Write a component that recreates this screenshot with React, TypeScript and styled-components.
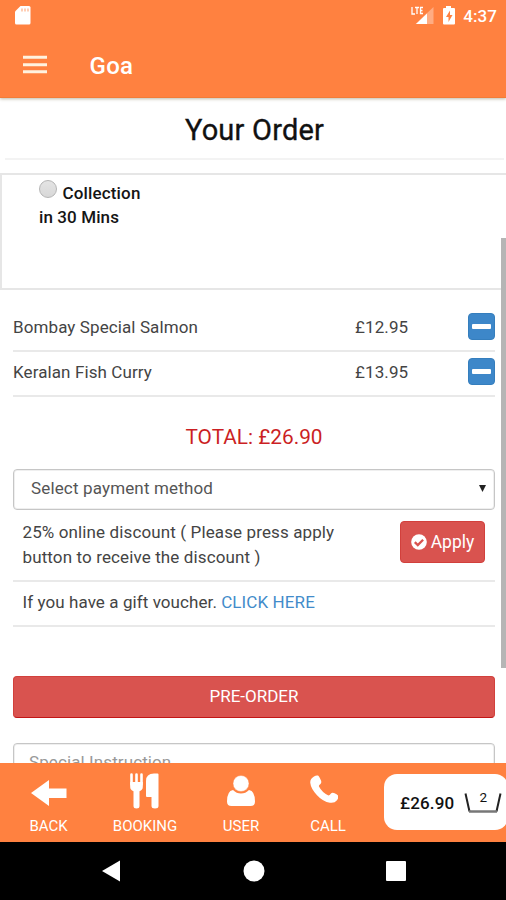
import React from 'react';
import styled, { createGlobalStyle } from 'styled-components';

const ORANGE = '#ff8140';

const GlobalStyle = createGlobalStyle`
  *, *::before, *::after { box-sizing: border-box; }
  html, body { margin: 0; padding: 0; background: #fff; }
  body { font-family: Roboto, "Liberation Sans", sans-serif; color: #444; overflow: hidden; }
  svg { display: block; }
`;

const Label = styled.span<{ $ls?: number }>`
  display: inline-block;
  white-space: nowrap;
  letter-spacing: ${({ $ls = 0 }) => $ls}px;
`;

const Screen = styled.div`
  width: 506px;
  height: 900px;
  display: flex;
  flex-direction: column;
  overflow: hidden;
`;

const Header = styled.header`
  flex: none;
  height: 98px;
  background: ${ORANGE};
  color: #fff;
  position: relative;
  z-index: 1;
  border-bottom: 1px solid #f27c38;
  box-shadow: 0 1px 3px rgba(90, 80, 40, 0.4);
`;

const StatusBar = styled.div`
  height: 32px;
  display: flex;
  justify-content: space-between;
  padding: 0 9px 0 15px;
`;

const StatusIcons = styled.div`
  display: flex;
`;

const Clock = styled.time`
  margin-left: 8px;
  font-size: 17px;
  line-height: 32px;
  font-weight: 500;
  letter-spacing: 0.1px;
`;

const AppBar = styled.div`
  height: 66px;
  display: flex;
  align-items: center;
  padding-left: 23px;
`;

const AppTitle = styled.h1`
  margin: 1px 0 0 42.5px;
  font-size: 24px;
  line-height: 30px;
  font-weight: 500;
  letter-spacing: 0.3px;
`;

const Content = styled.main`
  flex: none;
  height: 665px;
  overflow: hidden;
  position: relative;
  background: #fff;
`;

const Heading = styled.h2`
  margin: 0 2px 0 5px;
  height: 62px;
  border-bottom: 2px solid #f3f3f3;
  color: #111;
  font-size: 29px;
  line-height: 65px;
  font-weight: 400;
  -webkit-text-stroke: 0.35px #111;
  text-align: center;
`;

const CollectionBox = styled.section`
  margin-top: 13px;
  height: 117px;
  border: 2px solid #e6e6e6;
  border-right: 0;
  padding: 6px 0 0 37px;
  color: #151515;
  font-size: 17px;
  line-height: 24px;
  font-weight: 500;
`;

const RadioLine = styled.label`
  display: flex;
  gap: 5.5px;
`;

const Radio = styled.span`
  width: 18px;
  height: 18px;
  margin-top: -1px;
  border-radius: 50%;
  border: 1.5px solid #b5b5b5;
  background: linear-gradient(#e4e4e4, #d8d8d8);
`;

const Items = styled.section`
  margin: 17px 11px 0 13px;
`;

const ItemRow = styled.div`
  height: 45px;
  display: grid;
  grid-template-columns: 342px 1fr 27px;
  border-bottom: 2px solid #e9e9e9;
  font-size: 17px;
  line-height: 41px;
`;

const RemoveButton = styled.button`
  width: 27px;
  height: 27px;
  margin: 6px 0 0;
  padding: 0 0 1px;
  border: 1px solid #357ebd;
  border-radius: 4px;
  background: #3d87c9;
  display: flex;
  align-items: center;
  justify-content: center;
`;

const Total = styled.p`
  margin: 25px 0 0;
  padding-left: 2px;
  font-size: 20.8px;
  line-height: 30px;
  color: #cb1f24;
  text-align: center;
`;

const PaymentSelect = styled.div`
  margin: 17px 11px 0 13px;
  height: 41px;
  border: 1px solid #c6c6c6;
  box-shadow: inset 0 0 0 1px #efefef;
  border-radius: 4px;
  display: flex;
  justify-content: space-between;
  align-items: center;
  padding: 0 8px 3px 17px;
  font-size: 17px;
  color: #555;
`;

const OfferRow = styled.div<{ $height: number; $top: number }>`
  margin: 0 11px 0 13px;
  height: ${({ $height }) => $height}px;
  padding: ${({ $top }) => $top}px 10px 0 9.5px;
  border-bottom: 2px solid #e9e9e9;
  display: flex;
  justify-content: space-between;
  font-size: 17px;
  line-height: 25px;
`;

const OfferText = styled.div`
  display: flex;
  flex-direction: column;
`;

const VoucherLink = styled.a`
  color: #428bca;
`;

const ApplyButton = styled.button`
  width: 85px;
  height: 42px;
  margin-top: 1px;
  padding: 0 0 1px;
  border: 1px solid #d2403c;
  border-radius: 4px;
  background: #d9534f;
  color: #fff;
  font: 400 17.5px Roboto, sans-serif;
  display: flex;
  align-items: center;
  justify-content: center;
  gap: 4px;
`;

const PreOrderButton = styled.button`
  display: block;
  width: 482px;
  height: 42px;
  margin: 49px 0 0 13px;
  padding: 0 0 2px;
  border: 1px solid #d2403c;
  border-bottom: 1px solid #c21616;
  border-radius: 4px;
  background: #d9534f;
  color: #fff;
  font: 400 17px Roboto, sans-serif;
`;

const Instructions = styled.div`
  margin: 25px 11px 0 13px;
  height: 80px;
  border: 1px solid #c6c6c6;
  box-shadow: inset 0 0 0 1px #efefef;
  border-radius: 4px;
  padding: 6px 0 0 15px;
  font-size: 17px;
  line-height: 24px;
  color: #999;
`;

const ScrollThumb = styled.div`
  position: absolute;
  right: 0;
  top: 140px;
  width: 5px;
  height: 430px;
  background: #b5b5b5;
`;

const TabBar = styled.nav`
  flex: none;
  height: 79px;
  background: ${ORANGE};
  display: grid;
  grid-template-columns: 97px 96px 96px 78px 1fr;
  color: #fff;
`;

const Tab = styled.a`
  display: flex;
  flex-direction: column;
  align-items: center;
  padding-top: 9px;
  font-size: 15px;
  line-height: 18px;
`;

const TabIcon = styled.span<{ $dx?: number }>`
  height: 37px;
  margin: 0 ${({ $dx = 0 }) => $dx}px 8px 0;
`;

const Basket = styled.div`
  width: 124px;
  height: 56px;
  margin: 11px 0 0 17px;
  border-radius: 13px;
  background: #fff;
  color: #111;
  display: flex;
  align-items: center;
  padding: 2px 0 0 16px;
  gap: 10px;
  font-size: 17px;
  font-weight: 500;
`;

const BasketCount = styled.span`
  position: relative;
  width: 38px;
  height: 22px;
  flex: none;
`;

const Count = styled.span`
  position: absolute;
  left: 0;
  right: 0;
  top: -4px;
  text-align: center;
  font-size: 13.5px;
  line-height: 18px;
  font-weight: 400;
`;

const SystemNav = styled.footer`
  flex: none;
  height: 58px;
  background: #000;
  display: grid;
  grid-template-columns: 142px 143px 142px;
  padding-left: 40px;
  align-items: center;
  justify-items: center;
`;

const items = [
  { name: 'Bombay Special Salmon', price: '£12.95' },
  { name: 'Keralan Fish Curry', price: '£13.95' },
];

export default function App() {
  return (
    <Screen>
      <GlobalStyle />
      <Header>
        <StatusBar>
          <svg width="16" height="32" viewBox="0 0 16 32">
            <path d="M5.500 6H14q1.500 0 1.500 1.500V23q0 1.500-1.500 1.500H1.500Q0 24.500 0 23V11.500z" fill="#fff" />
            <path d="M7 8.500v3M10 8.500v3M13 8.500v3" stroke="#ffb48e" strokeWidth="1.300" />
          </svg>
          <StatusIcons>
            <svg width="44" height="32" viewBox="0 0 44 32">
              <path d="M22.500 7v17H4.500z" fill="#ffac82" />
              <path d="M16 13.500V24H5z" fill="#fff" />
              <path d="M1 7v7h3M4 7.500h4M6 7v7M12 7.500H9.500v6H12M9.500 10.500h2" fill="none" stroke="#fff" strokeWidth="1.300" />
              <path d="M35 6h5v2h3q1 0 1 1v14.500q0 1-1 1H33q-1 0-1-1V9q0-1 1-1h2z" fill="#fff" />
              <path d="M39 10.500l-4 6.500h2.500v5l4-7H39z" fill={ORANGE} />
            </svg>
            <Clock>4:37</Clock>
          </StatusIcons>
        </StatusBar>
        <AppBar>
          <svg width="24" height="20" viewBox="0 0 24 20">
            <path d="M0 2.200h24M0 9.700h24M0 16.700h24" stroke="#fff2df" strokeWidth="3" />
          </svg>
          <AppTitle>Goa</AppTitle>
        </AppBar>
      </Header>

      <Content>
        <Heading><Label $ls={0.2}>Your Order</Label></Heading>
        <CollectionBox>
          <RadioLine><Radio /><Label $ls={0.15}>Collection</Label></RadioLine>
          <Label $ls={0.1}>in 30 Mins</Label>
        </CollectionBox>

        <Items>
          {items.map((item) => (
            <ItemRow key={item.name}>
              <Label $ls={0.1}>{item.name}</Label>
              <Label $ls={0.1}>{item.price}</Label>
              <RemoveButton aria-label="Remove">
                <svg width="19" height="5" viewBox="0 0 19 5"><rect width="19" height="5" rx="1" fill="#fff" /></svg>
              </RemoveButton>
            </ItemRow>
          ))}
        </Items>

        <Total><Label>TOTAL: £26.90</Label></Total>

        <PaymentSelect>
          <Label $ls={0.15}>Select payment method</Label>
          <svg width="7" height="7" viewBox="0 0 7 7"><path d="M0 0h7L3.500 7z" fill="#222" /></svg>
        </PaymentSelect>

        <OfferRow $height={72} $top={10}>
          <OfferText>
            <Label $ls={0.12}>25% online discount ( Please press apply</Label>
            <Label $ls={0.12}>button to receive the discount )</Label>
          </OfferText>
          <ApplyButton>
            <svg width="16" height="16" viewBox="0 0 16 16">
              <circle cx="8" cy="8" r="7.800" fill="#fff" />
              <path d="M3.800 8.100l3 3 5.300-5.300" fill="none" stroke="#d9534f" strokeWidth="2.300" />
            </svg>
            <Label>Apply</Label>
          </ApplyButton>
        </OfferRow>
        <OfferRow $height={45} $top={8}>
          <span><Label $ls={0.08}>If you have a gift voucher.</Label> <VoucherLink><Label $ls={0.1}>CLICK HERE</Label></VoucherLink></span>
        </OfferRow>

        <PreOrderButton><Label>PRE-ORDER</Label></PreOrderButton>
        <Instructions><Label $ls={0.1}>Special Instruction</Label></Instructions>
        <ScrollThumb />
      </Content>

      <TabBar>
        <Tab>
          <TabIcon>
            <svg width="36" height="37" viewBox="0 0 36 37"><path d="M0 21L18 8v8.500h17.500v9.500H18v8z" fill="#fff" /></svg>
          </TabIcon>
          <Label>BACK</Label>
        </Tab>
        <Tab>
          <TabIcon>
            <svg width="30" height="37" viewBox="0 0 30 37">
              <path d="M1.500 2.500v10M6.500 2.500v10M11.500 2.500v10" stroke="#fff" strokeWidth="2.600" strokeLinecap="round" />
              <path d="M.2 10h12.600v5q0 3-3.300 4.300V34q0 2.500-3 2.500T3.500 34V19.300Q.2 18 .2 15z" fill="#fff" />
              <path d="M28.500 2.500V34q0 2.500-3.500 2.500T21.500 34V25H17q-1 0-1-1V9q0-7.500 8-7.500h3.500q1 0 1 1z" fill="#fff" />
            </svg>
          </TabIcon>
          <Label>BOOKING</Label>
        </Tab>
        <Tab>
          <TabIcon>
            <svg width="28" height="37" viewBox="0 0 28 37">
              <path d="M6 18Q0 19 0 29.500 0 34 4.500 34h19q4.500 0 4.500-4.500Q28 19 22 18q-3.500 3.500-8 3.500T6 18z" fill="#fff" />
              <circle cx="14" cy="11.500" r="8" fill="#fff" stroke={ORANGE} strokeWidth=".4" />
            </svg>
          </TabIcon>
          <Label>USER</Label>
        </Tab>
        <Tab>
          <TabIcon $dx={9}>
            <svg width="28" height="37" viewBox="0 0 28 37">
              <path d="M4 4.500Q6 3 8 3.500q1 .5 3 5 .8 2-.5 3.500-2 1.500-1.500 2.500 3 6 9.500 9 1 0 2.500-2 1-1.300 3-.5 4 1.800 4.300 3 .4 2-1.300 4.200-2.500 3.200-7 2.500-7-1-13-7.500Q.8 16.500.3 11-.2 7 4 4.500z" fill="#fff" />
            </svg>
          </TabIcon>
          <Label>CALL</Label>
        </Tab>
        <Basket>
          <Label $ls={0.15}>£26.90</Label>
          <BasketCount>
            <svg width="38" height="22" viewBox="0 0 38 22">
              <path d="M1.500 1.500l4 18" stroke="#222" strokeWidth="2" />
              <path d="M36.500 1.500l-4 18" stroke="#222" strokeWidth="2" />
              <path d="M5 19.500h28" stroke="#777" strokeWidth="2.500" />
            </svg>
            <Count>2</Count>
          </BasketCount>
        </Basket>
      </TabBar>

      <SystemNav>
        <svg width="18" height="22" viewBox="0 0 18 22"><path d="M0 11L18 .5v21z" fill="#fff" /></svg>
        <svg width="22" height="22" viewBox="0 0 22 22"><circle cx="11" cy="11" r="10.500" fill="#fff" /></svg>
        <svg width="20" height="20" viewBox="0 0 20 20"><rect width="20" height="20" rx="1" fill="#fff" /></svg>
      </SystemNav>
    </Screen>
  );
}
